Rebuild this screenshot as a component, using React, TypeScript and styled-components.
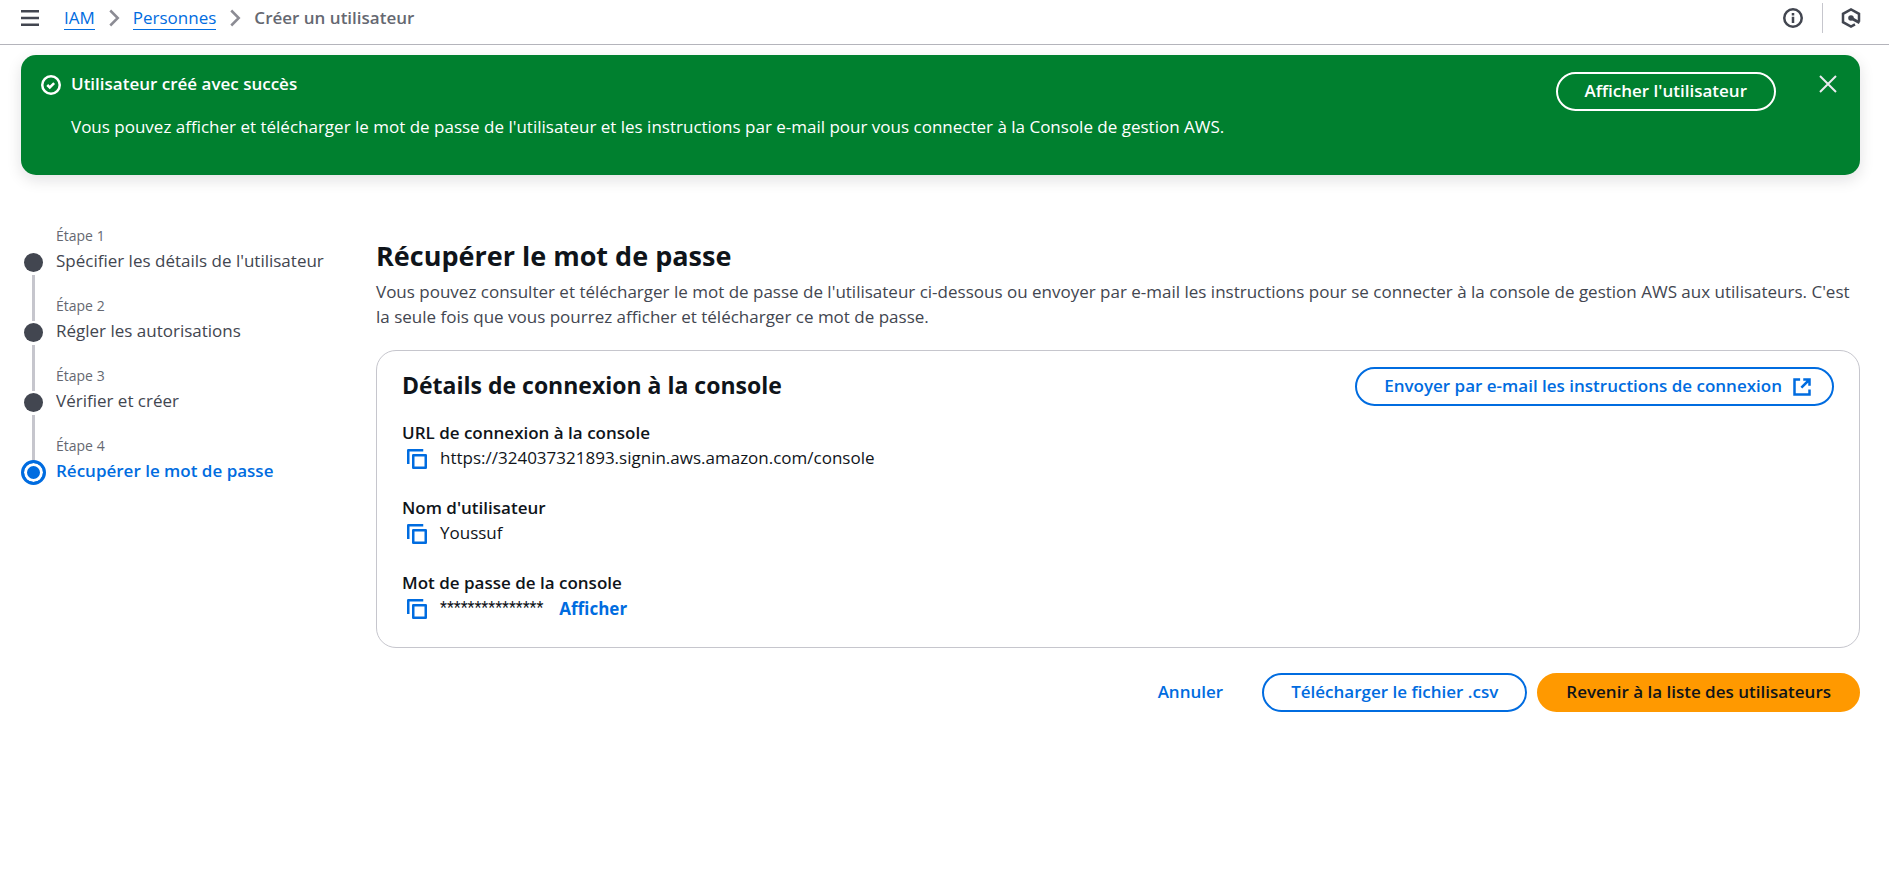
import React, { useState } from "react";
import styled, { createGlobalStyle } from "styled-components";

const blue = "#006ce0";
const ink = "#0f141a";
const slate = "#424650";

const GlobalStyle = createGlobalStyle`
  *, *::before, *::after { box-sizing: border-box; }
  body {
    margin: 0;
    background: #fff;
    color: ${ink};
    font-family: "Open Sans", "Noto Sans", sans-serif;
    font-size: 17px;
    line-height: 25px;
  }
  h1, h2, p, ol, dl, dd { margin: 0; padding: 0; }
  ol { list-style: none; }
  button { font: inherit; cursor: pointer; }
`;

const TopBar = styled.header`
  display: flex;
  align-items: center;
  justify-content: space-between;
  height: 45px;
  padding: 0 28px 8px 20px;
  border-bottom: 1px solid #b4b4bb;
`;

const BarGroup = styled.div`
  display: flex;
  align-items: center;
`;

const IconButton = styled.button<{ $color?: string }>`
  display: inline-flex;
  align-items: center;
  justify-content: center;
  padding: 0;
  border: 0;
  background: none;
  color: ${({ $color }) => $color ?? slate};
`;

const Icon = styled.svg`
  display: block;
  flex: none;
  width: 20px;
  height: 20px;
  fill: none;
  stroke: currentColor;
  stroke-width: 2;
`;

const Crumbs = styled.ol`
  display: flex;
  align-items: center;
  margin-left: 24px;
`;

const Crumb = styled.li`
  display: flex;
  align-items: center;
  color: #656871;
  font-weight: 600;
  line-height: 23px;
  padding-bottom: 2px;

  a {
    color: ${blue};
    font-weight: 400;
    text-decoration: none;
    box-shadow: 0 1px ${blue};
  }

  svg {
    margin: 2px 9px 0;
    color: #8c8c94;
  }
`;

const BarDivider = styled.span`
  width: 1px;
  height: 30px;
  margin: 0 18px 0 19px;
  background: #c6c6cd;
`;

const Page = styled.div`
  padding: 10px 29px 40px 21px;
`;

const Flash = styled.section`
  display: flex;
  align-items: flex-start;
  min-height: 120px;
  padding: 17px 20px;
  border-radius: 15px;
  background: #00802f;
  color: #fff;
  box-shadow: 0 5px 15px rgba(15, 20, 26, 0.12);

  > svg { margin-top: 3px; }
`;

const FlashText = styled.div`
  flex: 1;
  margin: -1px 0 0 10px;

  strong {
    display: block;
    margin-bottom: 18px;
    font-weight: 600;
  }
`;

type Variant = "outline" | "flash" | "primary" | "plain";

const palette: Record<Variant, [string, string, string]> = {
  outline: [blue, blue, "#fff"],
  flash: ["#fff", "#fff", "transparent"],
  primary: [ink, "#ff9900", "#ff9900"],
  plain: [blue, "transparent", "transparent"],
};

const Button = styled.button<{ $variant: Variant }>`
  display: inline-flex;
  align-items: center;
  gap: 10px;
  height: 39px;
  padding: 0 27px 2px;
  border: 2px solid ${({ $variant }) => palette[$variant][1]};
  border-radius: 20px;
  background: ${({ $variant }) => palette[$variant][2]};
  color: ${({ $variant }) => palette[$variant][0]};
  font-weight: 600;
  white-space: nowrap;
`;

const CardButton = styled(Button)`
  padding-right: 20px;

  svg { margin-top: 2px; }
`;

const CloseButton = styled(IconButton)`
  margin: 2px 2px 0 42px;
`;

const Wizard = styled.div`
  display: grid;
  grid-template-columns: 315px minmax(0, 1fr);
  column-gap: 40px;
  margin-top: 49px;
`;

const Steps = styled.ol`
  display: flex;
  flex-direction: column;
`;

const Step = styled.li`
  display: grid;
  grid-template-columns: 25px 1fr;
  column-gap: 10px;
  height: 70px;
`;

const Rail = styled.span<{ $last: boolean }>`
  display: flex;
  flex-direction: column;
  align-items: center;
  height: 70px;
  margin-top: ${({ $last }) => ($last ? "26px" : "29px")};
  gap: 3px;

  &::after {
    content: "";
    display: ${({ $last }) => ($last ? "none" : "block")};
    width: 3px;
    height: 46px;
    background: #c6c6cd;
  }
`;

const Dot = styled.span`
  width: 19px;
  height: 19px;
  border-radius: 50%;
  background: ${slate};
`;

const ActiveDot = styled.span`
  width: 25px;
  height: 25px;
  border: 3px solid ${blue};
  border-radius: 50%;
  background: ${blue};
  box-shadow: inset 0 0 0 3px #fff;
`;

const StepLabel = styled.div<{ $active: boolean }>`
  color: ${({ $active }) => ($active ? blue : slate)};
  font-weight: ${({ $active }) => ($active ? 600 : 400)};

  small {
    display: block;
    color: #656871;
    font-size: 14px;
    font-weight: 400;
    line-height: 24px;
  }
`;

const Main = styled.main`
  padding-top: 13px;
`;

const Title = styled.h1`
  font-size: 27px;
  line-height: 38px;
`;

const Lead = styled.p`
  margin-top: 4px;
  color: ${slate};
`;

const Card = styled.section`
  margin-top: 21px;
  padding: 16px 25px 27px;
  border: 1px solid #c6c6cd;
  border-radius: 20px;
`;

const CardHeader = styled.div`
  display: flex;
  align-items: center;
  justify-content: space-between;
  margin-bottom: 14px;

  h2 {
    padding-bottom: 3px;
    font-size: 23px;
    line-height: 30px;
  }
`;

const Fields = styled.dl`
  display: grid;
  row-gap: 25px;

  dt { font-weight: 600; }

  dd {
    display: flex;
    align-items: center;
    height: 25px;
  }
`;

const CopyButton = styled(IconButton)`
  margin: 2px 13px 0 5px;
`;

const Secret = styled.span`
  font-family: Roboto, sans-serif;
  font-size: 16px;
`;

const RevealButton = styled(IconButton)`
  margin: 1px 0 0 16px;
  font-weight: 700;
`;

const Actions = styled.div`
  display: flex;
  justify-content: flex-end;
  gap: 10px;
  margin-top: 25px;
`;

const steps = [
  "Spécifier les détails de l'utilisateur",
  "Régler les autorisations",
  "Vérifier et créer",
  "Récupérer le mot de passe",
];

const Chevron = () => (
  <Icon viewBox="0 0 16 16" aria-hidden="true">
    <path d="m5 2 6 6-6 6" />
  </Icon>
);

const Copy = ({ label }: { label: string }) => (
  <CopyButton $color={blue} type="button" aria-label={`Copier ${label}`}>
    <Icon viewBox="0 0 16 16">
      <path d="M15 5H5v10h10V5Z" strokeLinejoin="round" />
      <path d="M13 1H1v11" strokeLinejoin="round" />
    </Icon>
  </CopyButton>
);

export default function App() {
  const [shown, setShown] = useState(true);
  return (
    <>
      <GlobalStyle />
      <TopBar>
        <BarGroup>
          <IconButton type="button" aria-label="Ouvrir la navigation">
            <Icon viewBox="0 0 20 20">
              <path d="M1 3.25h18M1 10h18M1 16.75h18" strokeWidth="2.5" />
            </Icon>
          </IconButton>
          <nav aria-label="Fil d'Ariane">
            <Crumbs>
              <Crumb><a href="#iam">IAM</a><Chevron /></Crumb>
              <Crumb><a href="#personnes">Personnes</a><Chevron /></Crumb>
              <Crumb aria-current="page">Créer un utilisateur</Crumb>
            </Crumbs>
          </nav>
        </BarGroup>
        <BarGroup>
          <IconButton type="button" aria-label="Informations">
            <Icon viewBox="0 0 16 16">
              <circle cx="8" cy="8" r="7" />
              <path d="M8 7v5M8 4v2" />
            </Icon>
          </IconButton>
          <BarDivider />
          <IconButton type="button" aria-label="Amazon Q">
            <Icon viewBox="0 0 20 20">
              <path d="M18 13.500V5.800L10 1.500 2 5.800v8.400l8 4.300 4-2.200" strokeWidth="2.5" />
              <path d="m10 10 8.500 4.800" strokeWidth="3" />
              <circle cx="10" cy="10" r="1.800" fill="currentColor" />
            </Icon>
          </IconButton>
        </BarGroup>
      </TopBar>

      <Page>
        {shown && (
          <Flash role="status">
            <Icon viewBox="0 0 16 16" aria-hidden="true">
              <circle cx="8" cy="8" r="7" />
              <path d="m5 8 2 2 3.521-3.521" />
            </Icon>
            <FlashText>
              <strong>Utilisateur créé avec succès</strong>
              <p>
                Vous pouvez afficher et télécharger le mot de passe de l'utilisateur et les instructions par e-mail
                pour vous connecter à la Console de gestion AWS.
              </p>
            </FlashText>
            <Button $variant="flash" type="button">Afficher l'utilisateur</Button>
            <CloseButton $color="#ebebf0" type="button" aria-label="Fermer" onClick={() => setShown(false)}>
              <Icon viewBox="0 0 20 20"><path d="m2 2 16 16M18 2 2 18" /></Icon>
            </CloseButton>
          </Flash>
        )}

        <Wizard>
          <Steps>
            {steps.map((name, i) => {
              const active = i === steps.length - 1;
              return (
                <Step key={name} aria-current={active ? "step" : undefined}>
                  <Rail $last={active}>{active ? <ActiveDot /> : <Dot />}</Rail>
                  <StepLabel $active={active}>
                    <small>Étape {i + 1}</small>
                    {name}
                  </StepLabel>
                </Step>
              );
            })}
          </Steps>

          <Main>
            <Title>Récupérer le mot de passe</Title>
            <Lead>
              Vous pouvez consulter et télécharger le mot de passe de l'utilisateur ci-dessous ou envoyer par e-mail
              les instructions pour se connecter à la console de gestion AWS aux utilisateurs. C'est la seule fois que
              vous pourrez afficher et télécharger ce mot de passe.
            </Lead>

            <Card>
              <CardHeader>
                <h2>Détails de connexion à la console</h2>
                <CardButton $variant="outline" type="button">
                  Envoyer par e-mail les instructions de connexion
                  <Icon viewBox="0 0 16 16" aria-hidden="true">
                    <path d="M9 2h5v5M7.500 8.500 14 2M14 10v4H2V2h4.500" />
                  </Icon>
                </CardButton>
              </CardHeader>
              <Fields>
                <div>
                  <dt>URL de connexion à la console</dt>
                  <dd><Copy label="l'URL" />https://324037321893.signin.aws.amazon.com/console</dd>
                </div>
                <div>
                  <dt>Nom d'utilisateur</dt>
                  <dd><Copy label="le nom d'utilisateur" />Youssuf</dd>
                </div>
                <div>
                  <dt>Mot de passe de la console</dt>
                  <dd>
                    <Copy label="le mot de passe" />
                    <Secret>***************</Secret>
                    <RevealButton $color={blue} type="button">Afficher</RevealButton>
                  </dd>
                </div>
              </Fields>
            </Card>

            <Actions>
              <Button $variant="plain" type="button">Annuler</Button>
              <Button $variant="outline" type="button">Télécharger le fichier .csv</Button>
              <Button $variant="primary" type="button">Revenir à la liste des utilisateurs</Button>
            </Actions>
          </Main>
        </Wizard>
      </Page>
    </>
  );
}
